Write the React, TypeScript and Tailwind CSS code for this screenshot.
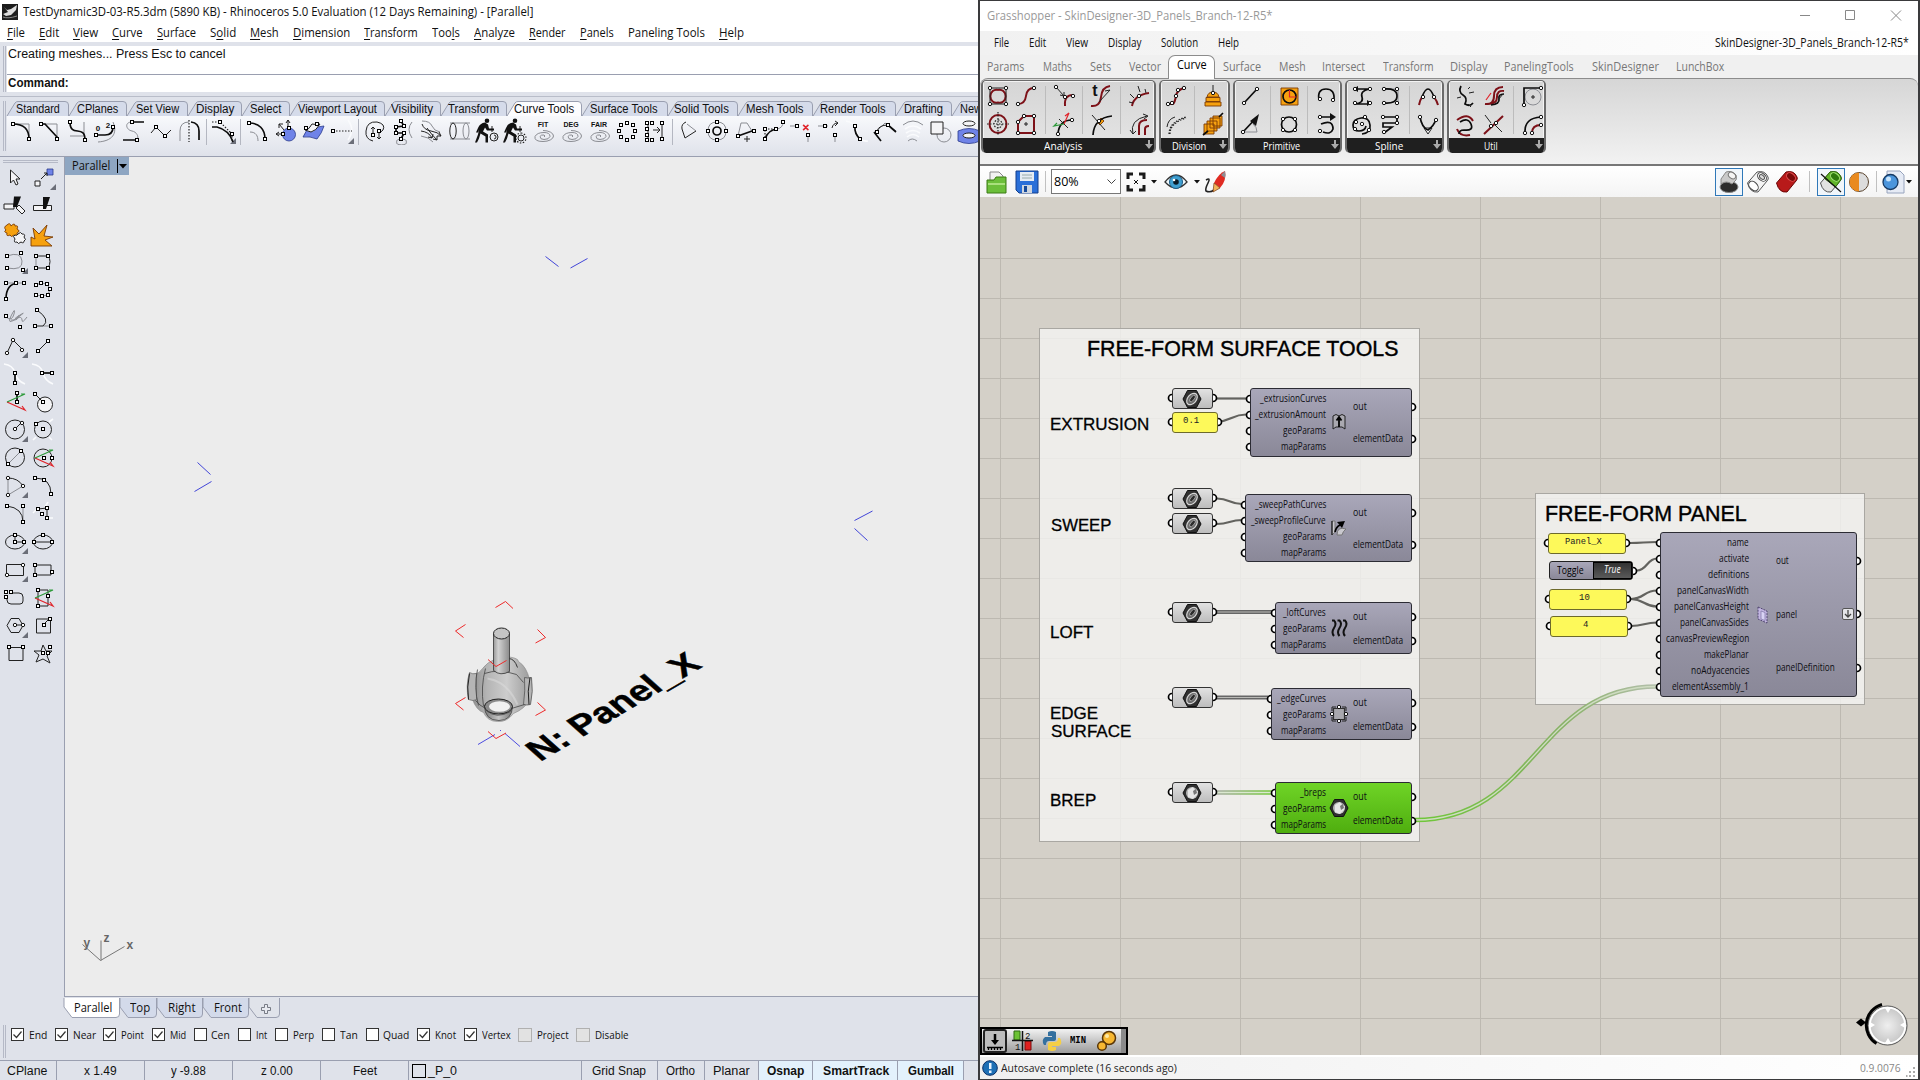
import React, { useLayoutEffect, useRef, useState } from "react";

/* Text squeezed or stretched to a given advance width. */
function Fit({ t, w, right, u }: { t: string; w: number; right?: boolean; u?: number }) {
  const ref = useRef<HTMLSpanElement>(null);
  const [s, setS] = useState(1);
  useLayoutEffect(() => {
    const n = ref.current?.offsetWidth ?0 + ref.current.offsetWidth : 0;
    if (n) setS(w / n);
  }, [w, t]);
  const body =
    u === undefined ? (
      t
    ) : (
      <>
        {t.slice(0, u)}
        <span className="underline underline-offset-2">{t[u]}</span>
        {t.slice(u + 1)}
      </>
    );
  return (
    <span className={right ? "flex shrink-0 justify-end whitespace-pre" : "flex shrink-0 justify-start whitespace-pre"} style={{ width: w }}>
      <span ref={ref} className={right ? "shrink-0 origin-right" : "shrink-0 origin-left"} style={{ transform: `scaleX(${s})` }}>
        {body}
      </span>
    </span>
  );
}

type Item = [label: string, start: number, end: number, underline?: number];

/* A row of labels, each starting at its own offset from the row's left edge. */
function Labels({ items, from = 0, className = "" }: { items: Item[]; from?: number; className?: string }) {
  return (
    <div className={"flex items-center leading-none " + className}>
      {items.map(([t, a, b, u], i) => (
        <div key={t} className="shrink-0" style={{ marginLeft: a - (i ? items[i - 1][2] : from) }}>
          <Fit t={t} w={b - a} u={u} />
        </div>
      ))}
    </div>
  );
}

type G = {
  k?: string; // thin dark stroke
  K?: string; // thick dark stroke
  g?: string; // grey stroke
  w?: string; // white stroke
  r?: string; // red
  e?: string; // green
  R?: string; // dark red thick
  o?: string; // orange fill
  b?: string; // blue fill
  f?: string; // black fill
  W?: string; // white fill with dark outline
  n?: string; // square nodes
  c?: string; // round nodes
  d?: string; // dotted stroke
  t?: [string, number, number, number][];
  m?: boolean; // flyout mark
};

const pts = (s: string) => s.split(" ").map((p) => p.split(",").map(Number));

function Glyph({ g }: { g: G }) {
  return (
    <svg width="28" height="28" viewBox="0 0 28 28" fill="none" className="block shrink-0">
      {g.m && <path d="M27 21v6h-6z" fill="#6b6e78" />}
      {g.w && <path d={g.w} stroke="#fafbfd" strokeWidth="1.6" />}
      {g.g && <path d={g.g} stroke="#8b8d93" strokeWidth="1" />}
      {g.b && <path d={g.b} fill="#6f83e8" stroke="#2a3a8c" strokeWidth=".8" />}
      {g.o && <path d={g.o} fill="#f6a10f" stroke="#7a3a04" strokeWidth=".9" />}
      {g.W && <path d={g.W} fill="#f4f4f6" stroke="#222" strokeWidth="1" />}
      {g.R && <path d={g.R} stroke="#7d1118" strokeWidth="2" />}
      {g.K && <path d={g.K} stroke="#0c0c0c" strokeWidth="1.7" />}
      {g.k && <path d={g.k} stroke="#222" strokeWidth="1" />}
      {g.d && <path d={g.d} stroke="#222" strokeWidth="1.2" strokeDasharray="1.5 1.5" />}
      {g.r && <path d={g.r} stroke="#e0242b" strokeWidth="1.2" />}
      {g.e && <path d={g.e} stroke="#2d9a3a" strokeWidth="1.2" />}
      {g.f && <path d={g.f} fill="#111" />}
      {g.n && pts(g.n).map(([x, y], i) => <rect key={i} x={x - 1.5} y={y - 1.5} width="3" height="3" fill="#fff" stroke="#000" strokeWidth="1" />)}
      {g.c && pts(g.c).map(([x, y], i) => <circle key={i} cx={x} cy={y} r="1.7" fill="#fff" stroke="#111" strokeWidth="1" />)}
      {g.t?.map(([s, x, y, z]) => (
        <text key={s} x={x} y={y} fontSize={z} textAnchor="middle" fontFamily="Liberation Sans" fontWeight="700" fill="#111">
          {s}
        </text>
      ))}
    </svg>
  );
}

const SEP = "sep";
const coil = "M14 13.500a10.500 5.500 0 1 1 0 11q-9 0-8-5q2-4 9-4q6 0 6 4q-1 3-6 3q-4 0-4-3q1-2 4-1.500q2 1 0 2";
const worker = "M14 1.500a2.300 2.300 0 1 1 0 4.600a2.300 2.300 0 1 1 0-4.600M5 11q2-5 7-5.500l3 2l1 4h5v2h-7l-2-3l-2 4l5 3v8h-2.500v-6l-5-3l-1.500 5l-2 4H2l3-8l1-5l-1 3H3z";

const topTools: (G | "sep")[] = [
  { g: "M6 7h16v15", K: "M6 7c10 0 16 5 16 15", n: "6,7 22,22" },
  { g: "M6 7h16v15", K: "M6 7h4l12 13v2", n: "6,7 22,22" },
  { g: "M7 19h14V5", K: "M7 5c0 16 15 2 15 18", n: "7,5 22,23" },
  { g: "M7 25c14-1 20-8 15-20", K: "M5 18h9q8 0 8-8", n: "5,18 22,10", t: [["0", 7, 14, 8], ["2", 17, 11, 8]] },
  { g: "M13 5c-8 0-6 8 0 9s8 9 3 9", K: "M12 5h13M4 23h14", n: "13,5 18,23" },
  { k: "M4 16l5-6l9 9l6-6", n: "9,10 18,19" },
  { g: "M5 24V14q0-9 9-9", K: "M16 5q8 1 8 9v9", d: "M14 3v22" },
  SEP,
  { d: "M3 5h8l12 12v7", K: "M3 10h5q12 3 16 15", n: "11,5 23,17", m: true },
  SEP,
  { g: "M7 15c6 0 8 4 8 9", K: "M6 6c10 0 16 6 16 16", n: "6,6 22,22" },
  { k: "M17 10V3l-2 3m2-3l2 3M12 17H5l3-2m-3 2l3 2M13 13L8 7m0 4V7h4", b: "M18 11a6 6 0 1 1 0 13a6 6 0 1 1 0-13", n: "18,11 12,17" },
  { b: "M4 20q3-7 8-11q6 2 13 0q-2 7-7 13q-7-3-14-2", W: "M6 13q4 0 7-6q5 1 8 0q-4 7-9 8z", n: "7,11 18,7" },
  { w: "M21 3c5 7 5 12 0 20", d: "M6 14h19", n: "6,14", m: true },
  SEP,
  { k: "M12 24q-8-2-7-10q1-10 11-9q9 2 6 8q-2 3-5 2M12 19v-9l-2 2m2-2l2 2M18 13v9l-2-2m2 2l2-2", n: "12,18 18,14" },
  { g: "M23 5q-6 7 0 16M8 25a5 2 0 1 0 9 0a5 2 0 1 0-9 0", K: "M12 4l3 5l-8 1v6h8l-3 6", n: "12,4 15,9 7,10 7,16 15,16 12,22" },
  { g: "M5 4q8 0 10 5t8 6M4 19q8 1 12 6", k: "M5 7q2 6 9 7t10 5l-4 0m4 0l-2-4M4 14q8 1 11 7l-4-1m4 1l1-4M10 11q4 6 10 12l-4-1m4 1v-4" },
  { g: "M5 6h20M5 22h20M21 6a3 8 0 1 1 0 16a3 8 0 1 1 0-16", k: "M8 6a3.200 8 0 1 1 0 16a3.200 8 0 1 1 0-16" },
  { f: worker, k: "M21 16a4 4 0 1 1 0 8a4 4 0 1 1 0-8M21 18a2 2 0 1 1 0 4M19 9v6" },
  { f: worker, d: "M20 16a5 5 0 1 1 0 10a5 5 0 1 1 0-10", k: "M20 18a3 3 0 1 1 0 6a3 3 0 1 1 0-6M19 9v6" },
  { g: coil, t: [["FIT", 14, 10, 7]] },
  { g: coil, t: [["DEG", 14, 10, 7]] },
  { g: coil, t: [["FAIR", 14, 10, 7]] },
  { n: "14,6 20,8 22,14 20,20 14,23 8,20 6,14 8,8" },
  { k: "M7 6v17M21 6v17M12 13h7l-3-3m3 3l-3 3", n: "6,6 6,12 6,18 6,23 11,6 11,23 21,6 21,22" },
  SEP,
  { k: "M11 5q-5 2-4 7l3 9M10 21l11-7" , g: "M12 7l9 7" },
  { g: "M14 5q9 0 9 9t-9 9t-9-9t9-9", K: "M14 10a4 4 0 1 1 0 8a4 4 0 1 1 0-8", n: "14,5 23,14 14,23 5,14" },
  { g: "M7 19l3-13h6l5 8", K: "M7 19l14-5", k: "M13 22h6m-3-3v6", n: "7,19 23,14" },
  { g: "M24 5q0 6-6 7", K: "M6 22q3-9 12-10", d: "M6 13v10M6 12h10", n: "6,12 6,22 17,12 24,5" },
  { g: "M3 9h8M21 18v7", n: "10,9 21,18", r: "M16 8l5 5m0-5l-5 5M16.500 8l5 5m0-5l-5 5" },
  { g: "M3 9h10M20 18v7", n: "10,9 20,18", k: "M17 11q1-5 6-5l-3-2m3 2l-3 3" },
  { w: "M3 4q9 1 11 11t11 9", K: "M12 9q-1 8 6 14", n: "12,9 17,22" },
  { g: "M6 14l8-8l11 8", K: "M3 15l7 9M17 8l8 7", k: "M6 14q2-6 11-6", n: "6,15 17,8" },
  { g: "M4 8q10-8 20 0M9 24q4-4 9 0", w: "M6 12q8-6 16 0M7 16q7-5 14 0M8 20q6-5 12 0" },
  { W: "M4 5h12v12H4z", g: "M17 11a7 7 0 1 1 0 14a7 7 0 1 1 0-14" },
  { b: "M3 14q11-5 22 0v10q-11 5-22 0z", W: "M14 4a6 2.500 0 1 1 0 5a6 2.500 0 1 1 0-5M14 16a6 2.500 0 1 1 0 5a6 2.500 0 1 1 0-5" },
];

const axesG = { e: "M6 15l18-8l-4 0", r: "M6 15l18 8l-3-4" };

const sideTools: G[] = [
  { W: "M9.500 7v13l3-3l2.500 5l2-1l-2-5h4z" },
  { W: "M6 18h5v5H6z", k: "M12 16l6-6m-3 0h3v3", b: "M18 6h6v6h-6z", m: true },
  { W: "M3 13h10v5H3zM15 17l3-3l6 6l-3 3z", f: "M13 5.500h7l-4 10.500h-4z" },
  { W: "M4.500 14.500h18v5H4.500z", f: "M14 6h7l-4 12h-3z" },
  { o: "M6 6q3-3 4 1q4-4 4 0q4-1 2 3q4 2 0 4q1 4-3 2q-3 3-4 0q-4 2-3-2q-4-1-1-3q-3-3 1-5", W: "M14 16q2 1 3-1q3-3 4 0q4 0 2 3q3 3 0 4q0 3-3 1q-3 3-4 0q-4 1-2-3q-3-3 0-4" },
  { o: "M2 27V18l4 2L4 9l6 6l8-9l-3 11l9 1l-8 3l7 6z" },
  { g: "M6 9q14-5 15 5t-15 7", n: "6,9 20,6 22,23 6,21", m: true },
  { g: "M7 21V9", k: "M7 9h12q4 5 0 12H7", n: "7,9 19,9 19,21 7,21" },
  { g: "M5 8h18", K: "M5 24q0-15 12-16", n: "5,8 15,8 23,8 5,24" },
  { g: "M7 10l5-2l6 1l3 5l-2 6l-6 1l-6-1", n: "7,10 12,8 18,9 21,14 19,20 13,21 7,20" },
  { g: "M5 14q6 5 8-3t-3 2t6 2t3-3t-3 3t5 2t5-3M10 17q8 1 8-5", n: "5,13 19,24" },
  { k: "M8 7q14 10 6 16H6", g: "M14 23h8", n: "8,7 6,23 22,23" },
  { k: "M6 22L12 9l10 10", c: "12,9 6,22 21,19", m: true },
  { k: "M9 20l10-10", n: "19,10 9,20" },
  { w: "M3 5q9 1 11 9t10 11", K: "M14 14v10", n: "14,14 14,24" },
  { w: "M3 5q9 1 11 9t10 11", K: "M13 14h10", n: "13,14 23,14" },
  { ...axesG, K: "M16 6v9", n: "16,6 16,15" },
  { W: "M16 10a7.500 7.500 0 1 1 0 15a7.500 7.500 0 1 1 0-15", k: "M6 7l8 8", n: "6,7 14,15" },
  { k: "M14 5a9.500 9.500 0 1 1 0 19a9.500 9.500 0 1 1 0-19M14 14l6-6", c: "14,14 21,8", m: true },
  { w: "M20 7l4-3M7 22l-3 3M20 22l3 3", k: "M14 6a8.500 8.500 0 1 1 0 17a8.500 8.500 0 1 1 0-17", n: "7,9 14,14" },
  { g: "M7 21L20 8", k: "M14 5a9.500 9.500 0 1 1 0 19a9.500 9.500 0 1 1 0-19", n: "20,8 7,21" },
  { ...axesG, k: "M14 6a9 9 0 1 1 0 18a9 9 0 1 1 0-18", n: "15,15 23,15" },
  { k: "M7 7q10 0 15 8", g: "M22 15L7 24V7", c: "7,7 22,15 7,24", m: true },
  { k: "M6 7q16 0 16 16", n: "6,7 15,9 22,23" },
  { g: "M22 7v16", k: "M6 7q16 2 16 16", n: "6,7 22,7 22,23" },
  { w: "M4 14l6-6M16 8l3-5M20 19l4 0", k: "M9 10l9-1v10", n: "9,10 18,9 13,15 18,19" },
  { k: "M14 8a9.500 7 0 1 1 0 14a9.500 7 0 1 1 0-14M14 8v7h9", n: "14,8 14,15 23,15", m: true },
  { k: "M14 8a9.500 7 0 1 1 0 14a9.500 7 0 1 1 0-14M5 15h18", n: "5,15 14,8 23,15" },
  { k: "M5.500 9.500h17v11h-17z", c: "22,10 6,20", m: true },
  { k: "M6 10h16v10H6z", n: "6,10 6,20 23,17" },
  { k: "M10 10h8q4 0 4 4v4q0 3-3 3h-9q-4 0-4-4v-3", n: "5,9 10,9 5,14" },
  { ...axesG, k: "M9 7h10v16H9z", n: "9,7 19,13 9,23" },
  { k: "M6 14.500l4-7h8l4 7l-4 7h-8zM14 14h8", c: "14,14 22,14", m: true },
  { k: "M7.500 8h14v14h-14zM14 14l7-7", n: "15,14 21,8" },
  { k: "M8 8.500h14v13H8z", n: "8,8 22,8" },
  { k: "M14 6l3 6h6l-5 5l3 7l-7-4l-7 3l3-7l-5-4h7z", n: "14,14 19,14 21,8" },
];

function Tab({ t, w, active, textW, pad }: { t: string; w: number; active?: boolean; textW: number; pad: number }) {
  return (
    <div className="relative h-[15px] shrink-0" style={{ width: w }}>
      <svg width={w} height="15" className="absolute inset-0 overflow-visible">
        <path d={`M0 15L8 2Q9 .5 11 .5H${w - 4}Q${w - 0.5} .5 ${w - 0.5} 4V15`} fill={active ? "#fcfcfe" : "#d5dbea"} stroke="#9a9fb0" strokeWidth="1" />
      </svg>
      <div className="relative flex h-[15px] items-center text-[12px] leading-none" style={{ paddingLeft: pad }}>
        <Fit t={t} w={textW} />
      </div>
    </div>
  );
}

const rhinoTabs: Item[] = [
  ["Standard", 16, 60], ["CPlanes", 77, 118], ["Set View", 136, 179], ["Display", 196, 234], ["Select", 250, 281], ["Viewport Layout", 298, 377],
  ["Visibility", 391, 433], ["Transform", 448, 499], ["Curve Tools", 514, 574], ["Surface Tools", 590, 658], ["Solid Tools", 674, 729],
  ["Mesh Tools", 746, 803], ["Render Tools", 820, 886], ["Drafting", 904, 943], ["New", 960, 982],
];
const tabEnds = [69, 127, 188, 242, 290, 385, 441, 507, 582, 668, 738, 813, 896, 952, 1000];

function ViewTab({ t, w, tw, pad, active }: { t: string; w: number; tw: number; pad: number; active?: boolean }) {
  return (
    <div className="relative h-[20px] shrink-0" style={{ width: w }}>
      <svg width={w} height="20" className="absolute inset-0 overflow-visible">
        <path d={`M0 0V9L8 19.500H${w - 4}Q${w - 0.5} 19.500 ${w - 0.5} 16V0`} fill={active ? "#fff" : t ? "#d3daea" : "#e0e3ea"} stroke="#9a9fb0" />
        {!t && <path d="M15.500 6.500h3v3h3v3h-3v3h-3v-3h-3v-3h3z" fill="#e8eaf0" stroke="#777b85" />}
      </svg>
      {t && (
        <div className="relative flex h-[19px] items-center font-['Open_Sans',sans-serif] text-[12px] leading-none" style={{ paddingLeft: pad }}>
          <Fit t={t} w={tw} />
        </div>
      )}
    </div>
  );
}

const snaps: [string, number, number, number, 0 | 1 | 2][] = [
  ["End", 11, 29, 47, 1], ["Near", 55, 73, 96, 1], ["Point", 103, 121, 144, 1], ["Mid", 152, 170, 186, 1], ["Cen", 194, 211, 230, 0],
  ["Int", 238, 256, 267, 0], ["Perp", 275, 293, 314, 0], ["Tan", 322, 340, 358, 0], ["Quad", 366, 383, 409, 0], ["Knot", 417, 435, 456, 1],
  ["Vertex", 464, 482, 511, 1], ["Project", 518, 537, 569, 2], ["Disable", 576, 595, 629, 2],
];

const status: [string, number, number, number, number][] = [
  ["CPlane", 0, 57, 7, 47], ["x 1.49", 57, 145, 84, 117], ["y -9.88", 145, 233, 171, 206], ["z 0.00", 233, 321, 261, 293], ["Feet", 321, 409, 353, 377],
  ["_P_0", 409, 582, 428, 457], ["Grid Snap", 582, 658, 592, 646], ["Ortho", 658, 705, 666, 695], ["Planar", 705, 759, 713, 750],
  ["Osnap", 759, 813, 767, 804], ["SmartTrack", 813, 898, 823, 889], ["Gumball", 898, 964, 908, 954],
];

function Viewport() {
  return (
    <div className="relative min-w-0 flex-1 overflow-hidden border-b border-l border-[#9a9fb0] bg-[#ececec]">
      <div className="flex h-[18px] w-[64px] items-center bg-[#8ea6c2] font-['Open_Sans',sans-serif] text-[12px] leading-none">
        <div className="pl-[7px]">
          <Fit t="Parallel" w={38} />
        </div>
        <div className="ml-[7px] h-[14px] w-px bg-black" />
        <svg width="8" height="5" className="ml-px">
          <path d="M0 0h8L4 4.500z" fill="#000" />
        </svg>
      </div>
      {/* drawing space: coordinates in window pixels */}
      <svg className="absolute left-0 top-0" width="914" height="840" viewBox="65.500 156.500 914 840" fill="none">
        <defs>
          <linearGradient id="tube" x1="0" x2="1">
            <stop offset="0" stopColor="#999" />
            <stop offset=".3" stopColor="#d2d2d2" />
            <stop offset="1" stopColor="#8b8b8b" />
          </linearGradient>
          <linearGradient id="body" x1="0" x2="1">
            <stop offset="0" stopColor="#8f8f8f" />
            <stop offset=".25" stopColor="#b4b4b4" />
            <stop offset=".6" stopColor="#cdcdcd" />
            <stop offset="1" stopColor="#9d9d9d" />
          </linearGradient>
          <linearGradient id="lip" x1="0" x2="1">
            <stop offset="0" stopColor="#777" />
            <stop offset=".5" stopColor="#c4c4c4" />
            <stop offset="1" stopColor="#777" />
          </linearGradient>
        </defs>
        <path d="M546 256l13 10M571 267.500l17-9.500M198 462l13 12M195 491l17-10M855 520l18-9.500M855 528l13 12" stroke="#4145d8" />
        <path d="M478.500 744l17-10M505.500 733l15 13M501 730.500v-1" stroke="#4b4be0" />
        <g>
          <path d="M474 674q6-1 9-6q4-6 14-10q1-3 8-2q14 1 14 5q8 5 11 18v20q-4 9-16 14q-7 9-16 8q-10 0-14-9q-7-2-11-13z" fill="url(#body)" stroke="#888" strokeWidth=".6" />
          <path d="M470 672q3 2 7 1v26q-3 2-8 0q-3-14 1-27z" fill="#b5b5b5" stroke="#666" strokeWidth=".7" />
          <path d="M525 677q3 1 7 0q2 14-1 27q-4 1-7 0q2-14 1-27z" fill="#b5b5b5" stroke="#555" strokeWidth=".8" />
          <path d="M478 669q-4 18 1 36M476 700q4 5 10 8M485 673q14-5 32 1l7 8M486 668q-5 18-2 38M512 708l13-4" stroke="#444" strokeWidth=".8" />
          <path d="M488 678q20 3 30 26" stroke="#dedede" strokeWidth="2" opacity=".5" />
          <path d="M470 673q-3 14-1 26M530.500 677q-3 14-1 27" stroke="#222" />
          <path d="M509 658q6 0 9 9" stroke="#333" />
          <path d="M494 633v37q7 6 16 1v-38z" fill="url(#tube)" stroke="#333" strokeWidth=".8" />
          <ellipse cx="502" cy="633" rx="8" ry="5.500" fill="#c4c4c4" stroke="#222" />
          <path d="M485 705q0 15 14.500 15q13 0 13.500-14z" fill="url(#lip)" stroke="#444" strokeWidth=".8" />
          <ellipse cx="499" cy="706" rx="14" ry="7.500" fill="#8a8a8a" stroke="#222" />
          <path d="M487 710q10 9 24 1" stroke="#444" strokeWidth=".8" />
          <ellipse cx="500" cy="706" rx="10.500" ry="5.200" fill="#f1f1f1" />
        </g>
        <path d="M496 607l10-6l7.500 7M466 624l-10 6.500l8 6.500M538 629l8 8l-10 5.500M488.500 659l8 7l10.500-6M466 697l-10 6l8 6.500M538 702l8 7.500l-10 5.500M488.500 731l8 7l10-5.500" stroke="#ee2a2a" />
        <text transform="matrix(.312 -.183 .252 .225 540.500 761.500)" fontSize="100" fontFamily="Liberation Sans" fontWeight="700" fill="#000" stroke="#000" strokeWidth="1.500">
          N: Panel_X
        </text>
        <path d="M101.500 940v20M101 960l24-14M101 960l-18-16" stroke="#777" />
        <g fontFamily="Liberation Sans" fontSize="12" fontWeight="700" fill="#666">
          <text x="127" y="948">x</text>
          <text x="104" y="941">z</text>
          <text x="84" y="946">y</text>
        </g>
      </svg>
    </div>
  );
}

function Rhino() {
  return (
    <div className="flex h-full w-[978px] shrink-0 flex-col overflow-hidden bg-[#dfe2ea] font-['Liberation_Sans',sans-serif] text-[12px] text-[#111]">
      <div className="flex h-[24px] shrink-0 items-center bg-white pl-[2px] font-['Open_Sans',sans-serif] leading-none">
        <svg width="16" height="16" viewBox="0 0 16 16">
          <path d="M0 0h16v16H0z" fill="#1c1c1c" />
          <path d="M2 3l3 3l4-1l6-4l-1 5l-5 5l-5 1l-3-2l5-2z" fill="#ddd" />
          <path d="M1 13q5 2 14-1" stroke="#888" fill="none" />
        </svg>
        <div className="pl-[5px]">
          <Fit t="TestDynamic3D-03-R5.3dm (5890 KB) - Rhinoceros 5.0 Evaluation (12 Days Remaining) - [Parallel]" w={510} />
        </div>
      </div>
      <Labels
        className="h-[18px] shrink-0 bg-white font-['Open_Sans',sans-serif]"
        items={[
          ["File", 7, 25, 0], ["Edit", 39, 59, 0], ["View", 73, 98, 0], ["Curve", 112, 143, 0], ["Surface", 157, 196, 0], ["Solid", 210, 236, 1], ["Mesh", 250, 279, 0],
          ["Dimension", 293, 350, 0], ["Transform", 364, 418, 0], ["Tools", 432, 460, 3], ["Analyze", 474, 515, 0], ["Render", 529, 566, 0], ["Panels", 580, 614, 0],
          ["Paneling Tools", 628, 705], ["Help", 719, 744, 0],
        ]}
      />
      <div className="flex h-[51px] shrink-0 pb-px pt-[4px]">
        <div className="ml-[3px] mr-px w-[3px] border-x border-[#b5b9c6]" />
        <div className="flex flex-1 flex-col bg-white">
          <div className="h-[29px] border-b border-[#9a9fb0] pl-px pt-[2px] leading-[13px]">
            <Fit t="Creating meshes... Press Esc to cancel" w={217} />
          </div>
          <div className="pl-px pt-[1px] font-bold leading-[15px]">
            <Fit t="Command:" w={61} />
          </div>
        </div>
      </div>
      <div className="h-[8px] shrink-0 pt-[3px]">
        <div className="h-px bg-[#b9bdc9]" />
      </div>
      <div className="flex h-[56px] shrink-0 border-b border-[#9a9fb0]">
        <div className="ml-[3px] mr-px h-[50px] w-[3px] border-x border-[#b5b9c6]" />
        <div className="flex min-w-0 flex-1 flex-col">
          <div className="flex h-[15px] shrink-0 border-b border-[#a6abba]">
            {rhinoTabs.map(([t, a, b], i) => {
              const s = i ? tabEnds[i - 1] : 7;
              return <Tab key={t} t={t} w={tabEnds[i] - s} textW={b - a} pad={a - s} active={i === 8} />;
            })}
          </div>
          <div className="flex flex-1 overflow-hidden bg-linear-to-b from-[#f8f9fc] to-[#dfe2ea] pt-px">
            {topTools.map((g, i) =>
              g === SEP ? <div key={i} className="mt-[2px] ml-[3px] mr-[2px] h-[26px] w-px shrink-0 bg-[#b4b7c1]" /> : <Glyph key={i} g={g as G} />
            )}
          </div>
        </div>
      </div>
      <div className="flex h-[840px] shrink-0">
        <div className="w-[64px] shrink-0">
          <div className="ml-[3px] mt-[3px] h-[3px] w-[55px] border-y border-[#b5b9c6]" />
          <div className="ml-px grid grid-cols-[28px_28px]">
            {sideTools.map((g, i) => (
              <Glyph key={i} g={g} />
            ))}
          </div>
        </div>
        <Viewport />
      </div>
      <div className="flex h-[23px] shrink-0 pl-[64px] pt-[1px]">
        <ViewTab t="Parallel" w={56} pad={10} tw={38} active />
        <ViewTab t="Top" w={37} pad={10} tw={20} />
        <ViewTab t="Right" w={46} pad={11} tw={28} />
        <ViewTab t="Front" w={46} pad={11} tw={28} />
        <ViewTab t="" w={31} pad={0} tw={0} />
      </div>
      <div className="flex h-[40px] shrink-0">
        <div className="ml-[3px] mt-[5px] h-[33px] w-[3px] border-x border-[#b5b9c6]" />
        <div className="flex h-[29px] items-center font-['Open_Sans',sans-serif] text-[11.500px] leading-none">
          {snaps.map(([t, box, a, b, s], i) => (
            <div key={t} className="flex items-center" style={{ marginLeft: box - (i ? snaps[i - 1][3] : 6) }}>
              <div className={s === 2 ? "size-[14px] border border-[#b0b0b0] bg-[#e2e2e2]" : "size-[13px] border border-[#333] bg-white"}>
                {s === 1 && (
                  <svg width="11" height="11" fill="none">
                    <path d="M1.500 5.500l3 3l5-6" stroke="#333" strokeWidth="1.200" />
                  </svg>
                )}
              </div>
              <div style={{ marginLeft: a - box - (s === 2 ? 14 : 13) }}>
                <Fit t={t} w={b - a} />
              </div>
            </div>
          ))}
        </div>
      </div>
      <div className="flex h-[20px] shrink-0 border-t border-[#9a9fb0] leading-none">
        {status.map(([t, l, r, a, b], i) => (
          <div
            key={t}
            className={"flex shrink-0 items-center border-r border-[#9a9fb0] " + (i > 8 ? "bg-[#e3f1fc] font-bold" : "")}
            style={{ width: r - l, paddingLeft: i === 5 ? 3 : a - l }}
          >
            {i === 5 && <div className="mr-[2px] size-[14px] border border-black" />}
            <Fit t={t} w={b - a} />
          </div>
        ))}
      </div>
    </div>
  );
}

/* ---------- node editor window ---------- */

const ribbon: { name: string; w: number; cols: (number | [G, G])[] }[] = [
  {
    name: "Analysis", w: 175,
    cols: [
      0, [{ k: "M6 6h16v16H6z", R: "M14 8a6 6.500 0 1 1 0 12.500a6 6.500 0 1 1 0-12.500", c: "6,6 22,6 22,22 6,22" }, { R: "M14 5a8.500 9 0 1 1 0 18a8.500 9 0 1 1 0-18", d: "M14 2v24M3 14h22M14 10a4 4 0 1 1 0 8a4 4 0 1 1 0-8" }],
      0, [{ R: "M6 22q7 0 8-8t8-8", c: "6,22 22,6" }, { R: "M6 23V12l6-6h10v17z", k: "M12 14h4m-2-2v4", c: "6,12 12,6 22,6 22,23 6,23" }],
      10, [{ R: "M15 24q-1-11 8-11", k: "M6 5l8 9m-4-1l4 1v-4", c: "6,5 15,15 23,14" }, { K: "M8 24q1-14 14-14", e: "M14 14L4 16l3-3", r: "M14 14l5-11l-4 3", k: "M9 9l9 9", c: "8,24 22,10" }],
      9, [{ R: "M4 24q9 1 10-9t9-11", k: "M12 20L23 8l-5 1", t: [["t", 8, 14, 16]] }, { K: "M6 25q1-17 19-19", o: "M10 12l4-4l3 3l-4 4z", k: "M5 5l13 15", c: "12,11" }],
      10, [{ R: "M7 24q2-11 17-13", k: "M4 20l4 1M5 12l4 4M13 4l2 6M20 7l1 4", c: "14,14" }, { R: "M14 25V16q0-6 8-6M20 25v-6q0-3 4-3", k: "M8 24q-4-14 14-18m-4-2l5 2l-4 3M5 20l3 4l3-3" }],
    ],
  },
  {
    name: "Division", w: 71,
    cols: [
      0, [{ R: "M6 22h5q2-2 3-8t8-8", c: "6,22 10,21 14,14 16,8 22,6" }, { d: "M7 24q0-12 17-17M8 24q0-11 16-16", k: "M5 17q1-8 8-10" }],
      9, [{ o: "M6 24h16v-4H6zM7 19.500h14v-4H7zM8 15q1-5 6-5t6 5z", k: "M14 3v7", c: "14,11" }, { o: "M5 14h10v10H5zM8 11h10v10H8zM11 8h10v10H11zM14 6h9v10h-9z", K: "M4 25l5-4M20 7l4-4" }],
    ],
  },
  {
    name: "Primitive", w: 109,
    cols: [
      1, [{ K: "M7 21L20 7", c: "7,21 20,7" }, { K: "M6 22L20 7", f: "M22 4l-9 7l6 5z", g: "M6 22h14q0-5-4-8", c: "6,22" }],
      10, [{ o: "M6 6h17v17H6z", K: "M14.500 8a6.500 6.500 0 1 1 0 13a6.500 6.500 0 1 1 0-13", r: "M14.500 8v7h7" }, { K: "M14 7a7.500 7.500 0 1 1 0 15a7.500 7.500 0 1 1 0-15", c: "8,9 20,9 8,20 20,20" }],
      9, [{ K: "M7 18q-2-11 7-11t8 11", c: "8,17 21,18" }, { K: "M6 7h15M9 14q12-5 12 5q-2 6-10 3", f: "M18 3l6 4l-6 4z", c: "8,7 8,21" }],
    ],
  },
  {
    name: "Spline", w: 99,
    cols: [
      0, [{ K: "M7 7h14q-9 2-7 8t-7 7h15", c: "7,7 22,7 7,21 22,21", f: "M5 7l5-3v6zM24 21l-5-3v6z" }, { K: "M14 24q9-1 8-9t-9-7t-8 7t6 6t7-5", c: "8,12 17,7 21,20 7,19 14,14" }],
      0, [{ g: "M8 7h14v15", K: "M8 7q13-1 13 7t-13 7", c: "8,7 21,7 21,21 8,21" }, { K: "M7 7h14v6H7v4h9l-8 6", c: "7,7 21,7 21,13 8,22" }],
      10, [{ K: "M8 15q6-16 12 0", R: "M5 23q1-5 3-8M20 15q3 4 4 8", c: "9,15 20,15" }, { K: "M6 7q2 11 8 13q6-4 8-11", W: "M10 18h8l-4 6z", c: "6,7 22,10" }],
    ],
  },
  {
    name: "Util", w: 99,
    cols: [
      2, [{ K: "M9 4q-3 6 2 9t2 9q5 3 8-1", k: "M5 16l4-1M17 11l5-1M16 7l2-2M16 22l3 3" }, { R: "M5 10Q16 2 21 11M5 19q3 8 13 6", K: "M8 12q8-5 11 2t-7 6q-5 0-5 4" }],
      0, [{ R: "M5 22q9 1 9-8t9-9M8 22q9 0 9-7t7-6", r: "M6 18l5-7", k: "M18 18l5-6", K: "M11 23q9-1 8-6t5-5" }, { R: "M4 24L23 6", k: "M5 5l6 8M22 22l-7-7", c: "11,16 16,13" }],
      10, [{ g: "M15 7a8 8 0 1 1 0 16a8 8 0 1 1 0-16", k: "M13 15h4m-2-2v4", K: "M6 23V6h17", c: "6,23 23,6" }, { K: "M7 23q-1-15 16-16", R: "M14 23q0-8 9-8", c: "7,23 23,7 14,23 23,15" }],
    ],
  },
];

const captionW: Record<string, number> = { Analysis: 38, Division: 34, Primitive: 37, Spline: 28, Util: 14 };

function Ribbon() {
  return (
    <div className="flex h-[86px] shrink-0 rounded-t-[8px] border-t border-[#8c8c8c] bg-linear-to-b from-[#d6d6d6] to-[#f2f2f2] pl-[1px] pt-px">
      {ribbon.map((r) => (
        <div key={r.name} className="mr-[3px] flex h-[73px] shrink-0 flex-col overflow-hidden rounded-[5px] border-x-2 border-t border-[#6b6b6b] bg-linear-to-b from-[#d5d5d5] to-[#e6e6e6]" style={{ width: r.w }}>
          <div className="flex h-[57px] shrink-0 border border-b-0 border-white/70">
            {r.cols.map((c, i) =>
              typeof c === "number" ? (
                <div key={i} className="flex shrink-0 justify-center py-1" style={{ width: c }}>
                  {c > 2 && <div className="w-px bg-[#bcbcbc]" />}
                </div>
              ) : (
                <div key={i} className="flex w-[28px] shrink-0 flex-col">
                  <Glyph g={c[0]} />
                  <Glyph g={c[1]} />
                </div>
              )
            )}
          </div>
          <div className="relative -mx-[2px] flex h-[15px] shrink-0 items-center justify-center bg-[#1f1f1f] pb-px font-['Open_Sans',sans-serif] text-[11px] leading-none text-white">
            <div className="pr-3">
              <Fit t={r.name} w={captionW[r.name]} />
            </div>
            <svg width="8" height="9" className="absolute right-[3px] top-[2px]">
              <path d="M3 0h2v4h3L4 9L0 4h3z" fill="#aaa" />
            </svg>
          </div>
        </div>
      ))}
    </div>
  );
}

function Can({ kind }: { kind: "dark" | "wire" | "red" | "green" }) {
  const fill = { dark: "#c9c9c9", wire: "#f5f5f5", red: "#b81a1a", green: "#e2e2e2" }[kind];
  const top = { dark: "#f4f4f4", wire: "#fff", red: "#7b0a0a", green: "#2f7a0c" }[kind];
  return (
    <svg width="26" height="26" viewBox="0 0 26 26" className="block shrink-0">
      {kind === "dark" ? (
        <>
          <ellipse cx="13" cy="18" rx="9" ry="5.500" fill="#2c2c2c" stroke="#888" />
          <path d="M5 10l5-7q6-2 10 3q1 3 0 5l-4 4q-6-4-11 0z" fill={fill} stroke="#888" />
          <ellipse cx="16" cy="6.500" rx="4" ry="2.800" transform="rotate(35 16 6.500)" fill={top} stroke="#777" />
        </>
      ) : (
        <path d="M2.500 14L12 3q8-2 11 5q1 2-1 4L13 23q-8 1-10.500-9z" fill={fill} stroke={kind === "red" ? "#6a0606" : "#555"} />
      )}
      {kind === "green" && <path d="M6.500 9.500l5.500-6.500q8-2 11 5q1 2-1 4l-4.500 6z" fill="#62b52a" stroke="#2c6a08" />}
      {kind !== "dark" && <ellipse cx="17" cy="8" rx="5" ry="3.500" transform="rotate(40 17 8)" fill={top} stroke={kind === "red" ? "#e05050" : kind === "green" ? "#a7e37a" : "#444"} />}
      {kind === "wire" && <><ellipse cx="8.500" cy="17" rx="5.500" ry="3.800" transform="rotate(45 8.500 17)" fill="#fff" stroke="#444" /><ellipse cx="17" cy="8" rx="3" ry="1.800" transform="rotate(40 17 8)" fill="#ddd" stroke="#555" /></>}
      {kind === "green" && <path d="M3 5l20 18" stroke="#111" strokeWidth="1.200" />}
    </svg>
  );
}

const Caret = () => (
  <svg width="6" height="4" className="shrink-0">
    <path d="M0 0h6L3 3.500z" fill="#111" />
  </svg>
);

function CanvasToolbar() {
  return (
    <div className="flex h-[33px] shrink-0 items-center border-t-2 border-[#777] bg-linear-to-b from-white to-[#f4f4f4]">
      <svg width="22" height="26" viewBox="0 0 22 26" className="ml-[6px]">
        <path d="M4 3h9l4 4v8H4z" fill="#f2f2f2" stroke="#888" />
        <path d="M1 24V11h7l2-3h10v16z" fill="#6cbf3a" stroke="#3b7a14" />
        <path d="M2 14h17v2H2z" fill="#a9e07d" />
      </svg>
      <svg width="24" height="24" viewBox="0 0 24 24" className="ml-[7px]">
        <path d="M1 1h22v22H4l-3-3z" fill="#2a6fd8" stroke="#123f8d" />
        <path d="M5 2h14v9H5z" fill="#e5ebf3" />
        <path d="M7 5h10M7 8h10" stroke="#9aa" />
        <path d="M7 15h10v8H7z" fill="#cfd6df" />
        <path d="M9 16h3v6H9z" fill="#174a9a" />
      </svg>
      <div className="ml-[6px] h-[21px] w-px bg-[#c0c0c0]" />
      <div className="ml-[5px] flex h-[25px] w-[70px] items-center justify-between border border-[#777] bg-white pl-[2px] pr-[4px] font-['Open_Sans',sans-serif] text-[12px] leading-none">
        <Fit t="80%" w={25} />
        <svg width="9" height="6" fill="none">
          <path d="M.5 .5l4 4l4-4" stroke="#444" />
        </svg>
      </div>
      <svg width="20" height="20" viewBox="0 0 20 20" fill="none" className="ml-[5px]">
        <path d="M7 2H2v5M13 2h5v5M2 13v5h5M18 13v5h-5" stroke="#1a1a1a" strokeWidth="3" />
        <path d="M8 8l4 4m0-4l-4 4" stroke="#111" />
      </svg>
      <div className="ml-[5px]"><Caret /></div>
      <svg width="24" height="18" viewBox="0 0 24 18" className="ml-[7px]">
        <path d="M1 9Q12-5 23 9Q12 21 1 9z" fill="#eef7fb" stroke="#333" strokeWidth="1.300" />
        <circle cx="12" cy="9" r="6.500" fill="#3f9fd0" stroke="#1b5c86" />
        <circle cx="12" cy="9" r="2.800" fill="#0a1a26" />
        <circle cx="10" cy="7" r="1.300" fill="#fff" />
      </svg>
      <div className="ml-[6px]"><Caret /></div>
      <svg width="24" height="24" viewBox="0 0 24 24" fill="none" className="ml-[4px]">
        <path d="M2 10q5-3 2 3t-2 8q4 2 8-1" stroke="#222" strokeWidth="1.600" />
        <path d="M10 13Q15 3 21 1q2 9-5 17z" fill="#e02b22" />
        <path d="M17 5l4-4q1 4 0 7z" fill="#8d8f96" />
        <path d="M10 13l6 5l-7 4z" fill="#f2b45a" stroke="#7a3b12" strokeWidth=".7" />
      </svg>
      <div className="flex-1" />
      <div className="flex size-[28px] items-center justify-center border border-[#2f78b8] bg-[#f1f6fb]"><Can kind="dark" /></div>
      <div className="ml-[2px]"><Can kind="wire" /></div>
      <div className="ml-[3px]"><Can kind="red" /></div>
      <div className="ml-[9px] h-[21px] w-px bg-[#c0c0c0]" />
      <div className="ml-[7px] flex size-[28px] items-center justify-center border border-[#2f78b8] bg-[#f1f6fb]"><Can kind="green" /></div>
      <svg width="22" height="22" viewBox="0 0 22 22" className="ml-[3px]">
        <circle cx="11" cy="11" r="9.500" fill="#dcdcdc" stroke="#5b4630" />
        <path d="M11 1.500a9.500 9.500 0 0 0 0 19z" fill="#e98a1f" />
      </svg>
      <div className="ml-[6px] h-[21px] w-px bg-[#c0c0c0]" />
      <svg width="24" height="24" viewBox="0 0 24 24" className="ml-[5px]">
        <path d="M5 1h13l4 4v18H5z" fill="#e6ebf5" stroke="#98a4bd" />
        <circle cx="8.500" cy="12" r="7.500" fill="#4b95dc" stroke="#173a63" strokeWidth="1.300" />
        <circle cx="6.500" cy="9" r="2.500" fill="#c8e4fb" />
      </svg>
      <div className="mr-[6px]"><Caret /></div>
    </div>
  );
}

const X0 = 980;
const Y0 = 197;

function At({ x, y, children, className = "", w, h }: { x: number; y: number; w?: number; h?: number; className?: string; children?: React.ReactNode }) {
  return (
    <div className={"absolute " + className} style={{ left: x - X0, top: y - Y0, width: w, height: h }}>
      {children}
    </div>
  );
}

/* Half-round connection grip with its centre at x, y. */
function Grip({ x, y, side }: { x: number; y: number; side: "l" | "r" }) {
  return (
    <svg className="absolute" width="8" height="10" style={{ left: x - X0 - 4, top: y - Y0 - 5 }}>
      <path d={side === "l" ? "M5 1.500a3.400 3.400 0 0 0 0 7" : "M3 1.500a3.400 3.400 0 0 1 0 7"} fill="#fff" stroke="#000" strokeWidth="1.700" />
    </svg>
  );
}

function Hex({ brep }: { brep?: boolean }) {
  return (
    <svg width="20" height="20" viewBox="0 0 20 20" className="shrink-0">
      <path d="M5.500 1.500h9l4.500 8.500l-4.500 8.500h-9L1 10z" fill="#303030" stroke="#111" />
      {brep ? (
        <>
          <circle cx="10" cy="10" r="6" fill="#b9b9b9" />
          <path d="M6 7l5-3l2 3l3 1l-1 4l-4 4l-5-2z" fill="#e6e6e6" />
          <path d="M11 8l3-2l1 4l-3 2z" fill="#777" />
        </>
      ) : (
        <>
          <ellipse cx="10" cy="10" rx="6.500" ry="4.300" transform="rotate(-50 10 10)" fill="#6b6b6b" stroke="#d5d5d5" strokeWidth="1.200" />
          <ellipse cx="10.500" cy="9.500" rx="4" ry="1.800" transform="rotate(-50 10.500 9.500)" fill="#2c2c2c" stroke="#b5b5b5" strokeWidth=".8" />
        </>
      )}
    </svg>
  );
}

function Param({ y, brep }: { y: number; brep?: boolean }) {
  return (
    <>
      <Grip x={1171} y={y + 10} side="l" />
      <Grip x={1214} y={y + 10} side="r" />
      <At x={1172} y={y} w={41} h={21} className="flex items-center justify-center rounded-[3px] border border-[#333] bg-linear-to-b from-[#e2e2e2] to-[#bdbdbd] pr-px">
        <Hex brep={brep} />
      </At>
    </>
  );
}

function Note({ x, y, w, t, tx, tw }: { x: number; y: number; w: number; t: string; tx: number; tw: number }) {
  return (
    <>
      <Grip x={x - 1} y={y + 10} side="l" />
      <Grip x={x + w + 1} y={y + 10} side="r" />
      <At x={x} y={y} w={w} h={21} className="flex items-start rounded-[3px] border border-[#6d6a2c] bg-[#fdf95a] pt-[3px] font-['Liberation_Mono',monospace] text-[9px] leading-[10px] text-[#222]">
        <div style={{ marginLeft: tx - x - 1 }}>
          <Fit t={t} w={tw} />
        </div>
      </At>
    </>
  );
}

type NodeProps = {
  x: number; y: number; w: number; h: number;
  ins: [string, number][];
  inRight: number;
  outs: [string, number, number][];
  outX: number;
  green?: boolean;
  icon: React.ReactNode;
  iconX: number;
  iconY: number;
};

function Node(p: NodeProps) {
  return (
    <>
      {p.ins.map(([t], i) => <Grip key={t} x={p.x - 1} y={p.y + 10.5 + i * 16} side="l" />)}
      {p.outs.map(([t, , y]) => <Grip key={t} x={p.x + p.w + 0.5} y={y + 0.5} side="r" />)}
      <At x={p.x} y={p.y} w={p.w} h={p.h}
        className={"rounded-[3px] border-[1.500px] border-[#2b2b33] bg-linear-to-b font-['Open_Sans',sans-serif] text-[10px] leading-[16px] text-[#0d0d12] " +
          (p.green ? "from-[#6fd426] to-[#4fae0e]" : "from-[#a9a7b9] to-[#8a8898]")}>
        <div className="flex flex-col items-end pt-px" style={{ width: p.inRight - p.x - 1 }}>
          {p.ins.map(([t, w]) => (
            <div key={t} className="h-[16px]">
              <Fit t={t} w={w} right />
            </div>
          ))}
        </div>
        {p.outs.map(([t, w, y]) => (
          <div key={t} className="absolute" style={{ left: p.outX - p.x - 1, top: y - p.y - 9 }}>
            <Fit t={t} w={w} />
          </div>
        ))}
        <div className="absolute size-[20px]" style={{ left: p.iconX - p.x - 12, top: p.iconY - p.y - 11 }}>{p.icon}</div>
      </At>
    </>
  );
}

const small = (kids: React.ReactNode) => (
  <svg width="20" height="20" viewBox="0 0 20 20" fill="none">{kids}</svg>
);

function Caption({ x, y, w, t, size = 17 }: { x: number; y: number; w: number; t: string; size?: number }) {
  return (
    <At x={x} y={y - size + 1} className={size > 20 ? "text-[21.500px] leading-[26px] [-webkit-text-stroke:.4px_#000]" : "text-[17px] leading-[20px] [-webkit-text-stroke:.3px_#000]"}>
      <Fit t={t} w={w} />
    </At>
  );
}

const geo: [string, number][] = [["geoParams", 43], ["mapParams", 45]];

function Canvas() {
  const wire = (x1: number, y1: number, x2: number, y2: number) => {
    const m = (x1 + x2) / 2;
    return `M${x1} ${y1}C${m} ${y1} ${m} ${y2} ${x2} ${y2}`;
  };
  const big = wire(1415, 820, 1657, 686.5);
  return (
    <div className="relative h-[858px] shrink-0 overflow-hidden bg-[#d4d0c8] bg-[linear-gradient(to_right,#bdb9b1_1px,transparent_1px),linear-gradient(to_bottom,#bdb9b1_1px,transparent_1px)] bg-[size:120px_40px] bg-[position:20px_21px] font-['Liberation_Sans',sans-serif] text-black">
      <At x={1039} y={328} w={381} h={514} className="border border-[#a9a7a2] bg-[#f4f4f3]/80" />
      <At x={1535} y={493} w={330} h={212} className="border border-[#a9a7a2] bg-[#f4f4f3]/80" />
      <Caption x={1087} y={357} w={311} t="FREE-FORM SURFACE TOOLS" size={22} />
      <Caption x={1545} y={522} w={202} t="FREE-FORM PANEL" size={22} />
      <Caption x={1050} y={431} w={99} t="EXTRUSION" />
      <Caption x={1051} y={532} w={60} t="SWEEP" />
      <Caption x={1050} y={639} w={43} t="LOFT" />
      <Caption x={1050} y={720} w={48} t="EDGE" />
      <Caption x={1051} y={738} w={80} t="SURFACE" />
      <Caption x={1050} y={807} w={46} t="BREP" />

      <svg className="absolute left-0 top-0" width="938" height="858" viewBox="980 197 938 858" fill="none">
        <g stroke="#63635f" strokeWidth="2.200">
          <path d={wire(1217, 421.5, 1246, 414.5)} />
          <path d="M1217 398.500h30" />
          <path d={wire(1217, 498.5, 1242, 504)} />
          <path d={wire(1217, 524, 1242, 520)} />
          <path d={wire(1630, 543, 1657, 542)} />
          <path d={wire(1637, 570.5, 1657, 558.5)} />
          <path d={wire(1631, 599, 1657, 590.5)} />
          <path d={wire(1631, 599, 1657, 606.5)} />
          <path d={wire(1631, 626, 1657, 622.5)} />
        </g>
        <path d="M1216 612h56M1216 697.500h52" stroke="#666" strokeWidth="4" />
        <path d="M1216 612h56M1216 697.500h52" stroke="#b9b9b5" strokeWidth="1.200" />
        <linearGradient id="gw" gradientUnits="userSpaceOnUse" x1="1215" x2="1272" y1="0" y2="0">
          <stop offset="0" stopColor="#a9aca5" />
          <stop offset="1" stopColor="#74c93a" />
        </linearGradient>
        <linearGradient id="gb" gradientUnits="userSpaceOnUse" x1="1415" x2="1657" y1="0" y2="0">
          <stop offset="0" stopColor="#6fc738" />
          <stop offset=".6" stopColor="#87b165" />
          <stop offset="1" stopColor="#b4bfac" />
        </linearGradient>
        <path d="M1216 791h56v3h-56z" stroke="url(#gw)" strokeWidth="1.300" fill="#dbe8d0" />
        <path d={big} stroke="url(#gb)" strokeWidth="4.500" />
        <path d={big} stroke="#cfdcc2" strokeWidth="1.300" />
      </svg>

      <Param y={388} />
      <Note x={1172} y={412} w={46} t="0.1" tx={1183} tw={16} />
      <Param y={488} />
      <Param y={513} />
      <Param y={602} />
      <Param y={687} />
      <Param y={782} brep />

      <Node x={1250} y={388} w={162} h={69} inRight={1326} outX={1353} iconX={1340} iconY={422}
        ins={[["_extrusionCurves", 66], ["_extrusionAmount", 71], ...geo]} outs={[["out", 14, 406], ["elementData", 50, 438]]}
        icon={small(<><path d="M4 4q3-3 6 0q3-3 6 0v13l-3-2h-6l-3 2z" fill="#aaa9b0" stroke="#222" /><path d="M10 15V6M7.500 8.500L10 5l2.500 3.500" stroke="#000" strokeWidth="1.800" /></>)} />
      <Node x={1245} y={494} w={167} h={68} inRight={1326} outX={1353} iconX={1340} iconY={528}
        ins={[["_sweepPathCurves", 71], ["_sweepProfileCurve", 75], ...geo]} outs={[["out", 14, 512], ["elementData", 50, 544]]}
        icon={small(<><path d="M3 3h3v11l-3 3M8 17q0-9 9-6q-3 2-4 6z" fill="#c9c8ce" stroke="#777" /><path d="M3 3v14" stroke="#111" strokeWidth="1.300" /><path d="M6 14q1-5 5-7" stroke="#000" strokeWidth="1.800" /><path d="M8 4l8-1l-3 7z" fill="#000" /></>)} />
      <Node x={1274.5} y={602} w={137.5} h={52} inRight={1326} outX={1353} iconX={1340} iconY={628}
        ins={[["_loftCurves", 43], ...geo]} outs={[["out", 14, 616], ["elementData", 50, 640]]}
        icon={small(<path d="M3 2.500h2q3 3 0 7.500t0 8M8.500 2.500h2q3 3 0 7.500t0 8M14 2.500h2q3 3 0 7.500t0 8" stroke="#111" strokeWidth="2" />)} />
      <Node x={1271} y={688} w={141} h={52} inRight={1326} outX={1353} iconX={1340} iconY={714}
        ins={[["_edgeCurves", 49], ...geo]} outs={[["out", 14, 702], ["elementData", 50, 726]]}
        icon={small(<><path d="M4.500 4.500h11v11h-11z" fill="#a9a8ae" stroke="#333" strokeWidth="1.200" /><path d="M3 7V3h4M13 3h4v4M17 13v4h-4M7 17H3v-4" stroke="#222" />{[[10, 3], [17, 10], [10, 17], [3, 10]].map(([a, b]) => <circle key={`${a}-${b}`} cx={a} cy={b} r="1.700" fill="#fff" stroke="#111" />)}</>)} />
      <Node x={1274.5} y={782} w={137.5} h={52} inRight={1326} outX={1353} iconX={1340} iconY={808} green
        ins={[["_breps", 26], ...geo]} outs={[["out", 14, 796], ["elementData", 50, 820]]} icon={<Hex brep />} />

      <Note x={1548} y={533} w={78} t="Panel_X" tx={1565} tw={37} />
      <Note x={1549} y={589} w={78} t="10" tx={1579} tw={11} />
      <Note x={1550} y={616} w={78} t="4" tx={1583} tw={5} />
      <Grip x={1634} y={570.5} side="r" />
      <At x={1549} y={561} w={84} h={19} className="flex items-stretch rounded-[3px] border-[1.500px] border-[#222] bg-linear-to-b from-[#a9a7b9] to-[#8a8898] font-['Open_Sans',sans-serif] text-[10px] leading-[16px]">
        <div className="pl-[7px]"><Fit t="Toggle" w={27} /></div>
        <div className="ml-auto flex w-[39px] justify-center border border-black bg-linear-to-b from-[#333] to-[#5a5a5a] italic leading-[13px] text-white">
          <Fit t="True" w={17} />
        </div>
      </At>
      <Node x={1660} y={532} w={197} h={165} inRight={1749} outX={1776} iconX={1764} iconY={615}
        ins={[["name", 22], ["activate", 30], ["definitions", 41], ["panelCanvasWidth", 72], ["panelCanvasHeight", 75], ["panelCanvasSides", 69], ["canvasPreviewRegion", 83], ["makePlanar", 45], ["noAdyacencies", 58], ["elementAssembly_1", 77]]}
        outs={[["out", 13, 560], ["panel", 21, 613.5], ["panelDefinition", 59, 667]]}
        icon={small(<><path d="M5 2l9 4v12l-9-4z" fill="#c3b6e2" stroke="#4f4470" strokeDasharray="2 1" /><path d="M8 6l4 1.500v8L8 14z" fill="#d9d3f5" stroke="#7c72a5" strokeWidth=".7" /></>)} />
      <At x={1842} y={608} w={12} h={12} className="rounded-[2px] border border-[#555] bg-[#e4e4e8]">
        <svg width="10" height="10" fill="none"><path d="M5 1v7M2 5l3 3l3-3" stroke="#444" strokeWidth="1.300" /></svg>
      </At>

      <At x={1850} y={997} w={64} h={56}>
        <svg width="64" height="56" viewBox="1850 997 64 56" fill="none">
          <defs>
            <radialGradient id="knob"><stop offset="0" stopColor="#efefef" /><stop offset="1" stopColor="#c4c4c4" /></radialGradient>
          </defs>
          <circle cx="1887.500" cy="1025.500" r="19.500" fill="url(#knob)" stroke="#555" />
          <circle cx="1887.500" cy="1025.500" r="17.800" stroke="#fff" strokeWidth="1.800" />
          <path d="M1882 1004.500a21.500 21.500 0 0 0-5.500 39" stroke="#000" strokeWidth="3" />
          <path d="M1856 1022.500l5-4l5 4l-5 4z" fill="#000" />
          <path d="M1885 1008h6l-3 5zM1885 1043h6l-3-5zM1870 1022v6l5-3zM1905 1022v6l-5-3z" fill="#fff" />
        </svg>
      </At>

      <At x={980} y={1027} w={148} h={28} className="flex items-center border-2 border-black bg-linear-to-b from-[#f2f2f2] to-[#9c9c9c]">
        <div className="ml-px flex h-[24px] w-[24px] items-center justify-center rounded-[3px] border-2 border-[#222] bg-[#bdbdbd]">
          <svg width="18" height="18" fill="none"><path d="M9 2v8" stroke="#000" strokeWidth="2.500" /><path d="M5 8h8l-4 5z" fill="#000" /><path d="M1 15.500h16M2.500 15v3M5.500 15v3M8.500 15v3M11.500 15v3M14.500 15v3" stroke="#000" strokeWidth="1.300" /></svg>
        </div>
        <svg width="22" height="22" viewBox="0 0 22 22" className="ml-[5px]">
          <path d="M2 1h6v9H2z" fill="#6cc234" stroke="#2d6a10" />
          <path d="M13 11h6v9h-6z" fill="#e02020" stroke="#7a0c0c" />
          <path d="M0 10.500h21M10.500 1v20" stroke="#111" strokeWidth="1.500" />
          <text x="13" y="9" fontSize="9" fontFamily="Liberation Mono" fill="#111">2</text>
          <text x="3" y="20" fontSize="9" fontFamily="Liberation Mono" fill="#111">1</text>
        </svg>
        <svg width="22" height="22" viewBox="0 0 22 22" className="ml-[7px]">
          <path d="M7 2q4-2 8 0v7q0 2-3 2H8q-3 0-3 4H3q-3-5 1-8h7V6H7z" fill="#34709f" />
          <path d="M15 20q-4 2-8 0v-6q0-2 3-2h4q3 0 3-4h2q3 5-1 8h-7v1h4z" fill="#f5cf45" />
        </svg>
        <div className="ml-[7px] font-['Liberation_Mono',monospace] text-[10px] font-bold leading-none"><Fit t="MIN" w={16} /></div>
        <svg width="22" height="22" viewBox="0 0 22 22" className="ml-[10px]">
          <circle cx="13" cy="8" r="6.500" fill="#f7b731" stroke="#5a3606" strokeWidth="1.500" />
          <circle cx="6" cy="16" r="4.300" fill="#f7b731" stroke="#5a3606" strokeWidth="1.500" />
          <circle cx="11" cy="6" r="2" fill="#fde9a6" />
        </svg>
        <div className="ml-auto h-full w-[5px] bg-[#8a8a8a]" />
      </At>
    </div>
  );
}

function Grasshopper() {
  return (
    <div className="flex h-full w-[942px] flex-col overflow-hidden border-2 border-b border-t border-[#3a3a3c] bg-[#f0f0f0] font-['Open_Sans',sans-serif] text-[12px] leading-none">
      <div className="flex h-[30px] shrink-0 items-center justify-between bg-white pl-[7px] pr-[16px] text-[#999]">
        <Fit t="Grasshopper - SkinDesigner-3D_Panels_Branch-12-R5*" w={286} />
        <svg width="102" height="12" fill="none" stroke="#888">
          <path d="M0 5.500h10M45.500 .5h9v9h-9zM91 .5l10 10m0-10l-10 10" />
        </svg>
      </div>
      <div className="flex h-[24px] shrink-0 items-center justify-between bg-linear-to-r from-[#f1f1f1] to-white pr-[9px] text-[#111]">
        <Labels from={980} items={[["File", 994, 1009], ["Edit", 1029, 1046], ["View", 1066, 1088], ["Display", 1108, 1142], ["Solution", 1161, 1198], ["Help", 1218, 1239]]} />
        <Fit t="SkinDesigner-3D_Panels_Branch-12-R5*" w={194} />
      </div>
      <div className="relative h-[23px] shrink-0 text-[#777]">
        <Labels className="h-[24px]" from={980}
          items={[["Params", 987, 1024], ["Maths", 1043, 1072], ["Sets", 1090, 1111], ["Vector", 1129, 1161], ["Surface", 1223, 1261], ["Mesh", 1279, 1306], ["Intersect", 1322, 1365], ["Transform", 1383, 1434], ["Display", 1450, 1488], ["PanelingTools", 1504, 1574], ["SkinDesigner", 1592, 1659], ["LunchBox", 1676, 1724]]} />
        <div className="absolute left-[188px] top-0 z-10 flex h-[24px] w-[47px] items-start justify-center rounded-t-[7px] border border-b-0 border-[#8c8c8c] bg-white pt-[3px] text-black">
          <Fit t="Curve" w={30} />
        </div>
      </div>
      <Ribbon />
      <CanvasToolbar />
      <Canvas />
      <div className="flex flex-1 items-center border-t-2 border-white bg-linear-to-r from-[#f0f0f0] to-white pl-[2px] text-[#222]">
        <svg width="16" height="16">
          <circle cx="8" cy="8" r="7.300" fill="#1d6fb5" stroke="#0a2f66" />
          <path d="M7 3h2.500v6H7zM7 10.500h2.500V13H7z" fill="#e8f4ff" />
        </svg>
        <div className="ml-[3px] text-[11.500px]"><Fit t="Autosave complete (16 seconds ago)" w={176} /></div>
        <div className="ml-auto text-[11.500px] text-[#888]"><Fit t="0.9.0076" w={41} /></div>
        <svg width="10" height="10" className="ml-[5px] mr-[2px] mt-2">
          <path d="M7 0h2v2H7zM7 4h2v2H7zM7 8h2v2H7zM3 4h2v2H3zM3 8h2v2H3zM0 8h1.500v2H0z" fill="#aaa" />
        </svg>
      </div>
    </div>
  );
}

export default function App() {
  return (
    <div className="flex h-[1080px] w-[1920px] overflow-hidden bg-white">
      <Rhino />
      <Grasshopper />
    </div>
  );
}
